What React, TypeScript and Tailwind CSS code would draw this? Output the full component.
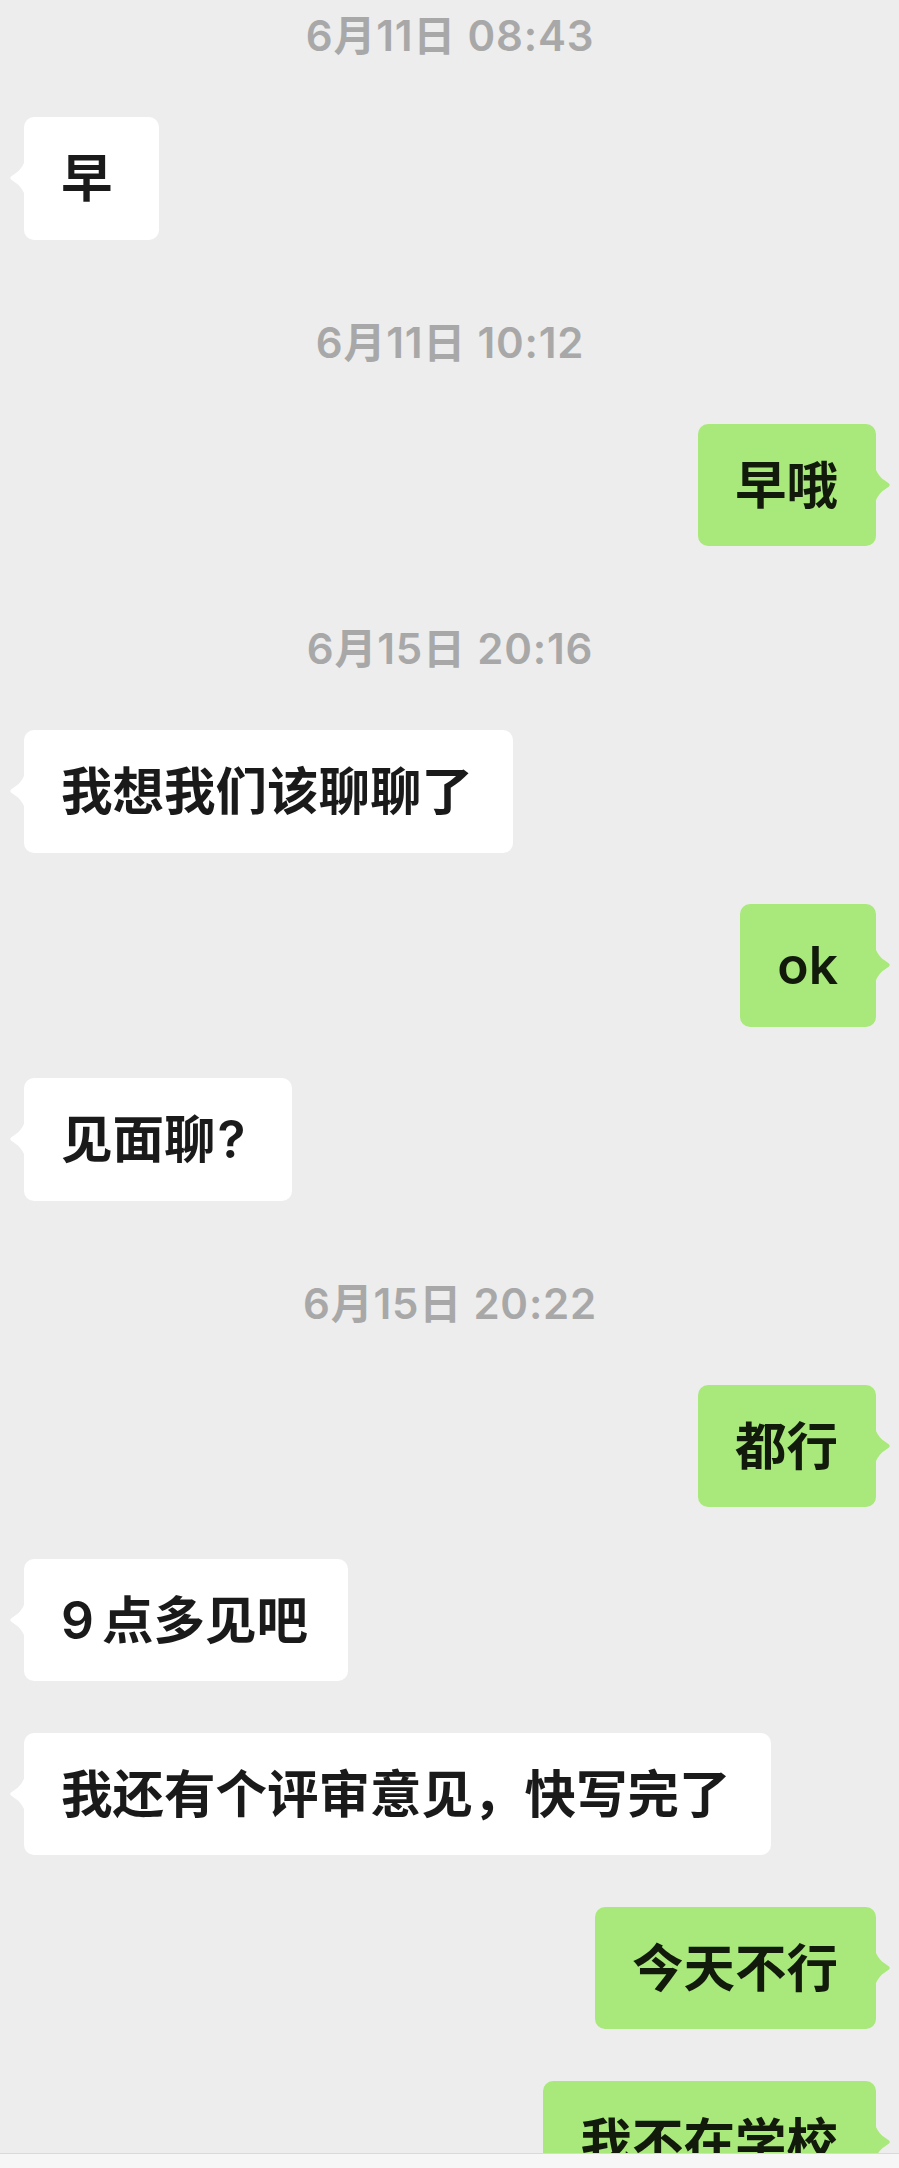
import React from "react";

type Msg =
  | { kind: "time"; text: string; first?: boolean }
  | { kind: "in"; text: string }
  | { kind: "out"; text: string };

const messages: Msg[] = [
  { kind: "time", text: "6月11日 08:43", first: true },
  { kind: "in", text: "早" },
  { kind: "time", text: "6月11日 10:12" },
  { kind: "out", text: "早哦" },
  { kind: "time", text: "6月15日 20:16" },
  { kind: "in", text: "我想我们该聊聊了" },
  { kind: "out", text: "ok" },
  { kind: "in", text: "见面聊?" },
  { kind: "time", text: "6月15日 20:22" },
  { kind: "out", text: "都行" },
  { kind: "in", text: "9点多见吧" },
  { kind: "in", text: "我还有个评审意见，快写完了" },
  { kind: "out", text: "今天不行" },
  { kind: "out", text: "我不在学校" },
];

const FONT = `Inter, "Noto Sans CJK SC", sans-serif`;

function TailRight({ color }: { color: string }) {
  return (
    <svg
      className="absolute right-[-15px] top-[43px]"
      width="16"
      height="36"
      viewBox="0 0 16 36"
    >
      <path
        d="M0 0 Q1.5 6 7 11.5 L14 16.5 Q15.6 18 14 19.5 L7 24.5 Q1.5 30 0 36 Z"
        fill={color}
      />
    </svg>
  );
}

function TailLeft({ color }: { color: string }) {
  return (
    <svg
      className="absolute left-[-15px] top-[43px]"
      width="16"
      height="36"
      viewBox="0 0 16 36"
    >
      <path
        d="M16 0 Q14.5 6 9 11.5 L2 16.5 Q0.4 18 2 19.5 L9 24.5 Q14.5 30 16 36 Z"
        fill={color}
      />
    </svg>
  );
}

function renderText(text: string) {
  if (text === "9点多见吧") {
    return (
      <>
        <span className="mr-[8px]">9</span>点多见吧
      </>
    );
  }
  if (text === "见面聊?") {
    return (
      <>
        见面聊<span className="ml-[2px] mr-[6px]">?</span>
      </>
    );
  }
  return text;
}

function Bubble({ text, out }: { text: string; out: boolean }) {
  return (
    <div
      className={
        out
          ? "relative min-w-[135px] rounded-[10px] bg-[#a9e97b] pl-[37px] pr-[38px] py-[26px] text-[51.5px] leading-[70.5px] font-semibold text-[#111a0b] whitespace-nowrap"
          : "relative min-w-[135px] rounded-[10px] bg-white pl-[37px] pr-[40px] py-[26px] text-[51.5px] leading-[70.5px] font-semibold text-[#1a1a1a] whitespace-nowrap"
      }
      style={{ fontFamily: FONT }}
    >
      {out ? <TailRight color="#a9e97b" /> : <TailLeft color="#ffffff" />}
      {renderText(text)}
    </div>
  );
}

export default function App() {
  return (
    <div className="w-[899px] h-[2168px] flex flex-col bg-[#ededed] overflow-hidden">
      <div className="h-[2153px] overflow-hidden flex flex-col gap-[51.5px] pt-[5.5px] pl-[24px] pr-[23px]">
        {messages.map((m, i) => {
          if (m.kind === "time") {
            return (
              <div
                key={i}
                className={
                  m.first
                    ? "h-[60px] flex items-center justify-center text-[42px] tracking-[0.8px] font-semibold text-[#a8a8a8] shrink-0"
                    : "mt-[21px] h-[60px] flex items-center justify-center text-[42px] tracking-[0.8px] font-semibold text-[#a8a8a8] shrink-0"
                }
                style={{ fontFamily: FONT }}
              >
                {m.text}
              </div>
            );
          }
          return (
            <div
              key={i}
              className={
                m.kind === "out"
                  ? "flex justify-end shrink-0"
                  : "flex justify-start shrink-0"
              }
            >
              <Bubble text={m.text} out={m.kind === "out"} />
            </div>
          );
        })}
      </div>
      <div className="h-[15px] bg-[#f6f6f6] border-t border-[#d9d9d9] shrink-0" />
    </div>
  );
}
